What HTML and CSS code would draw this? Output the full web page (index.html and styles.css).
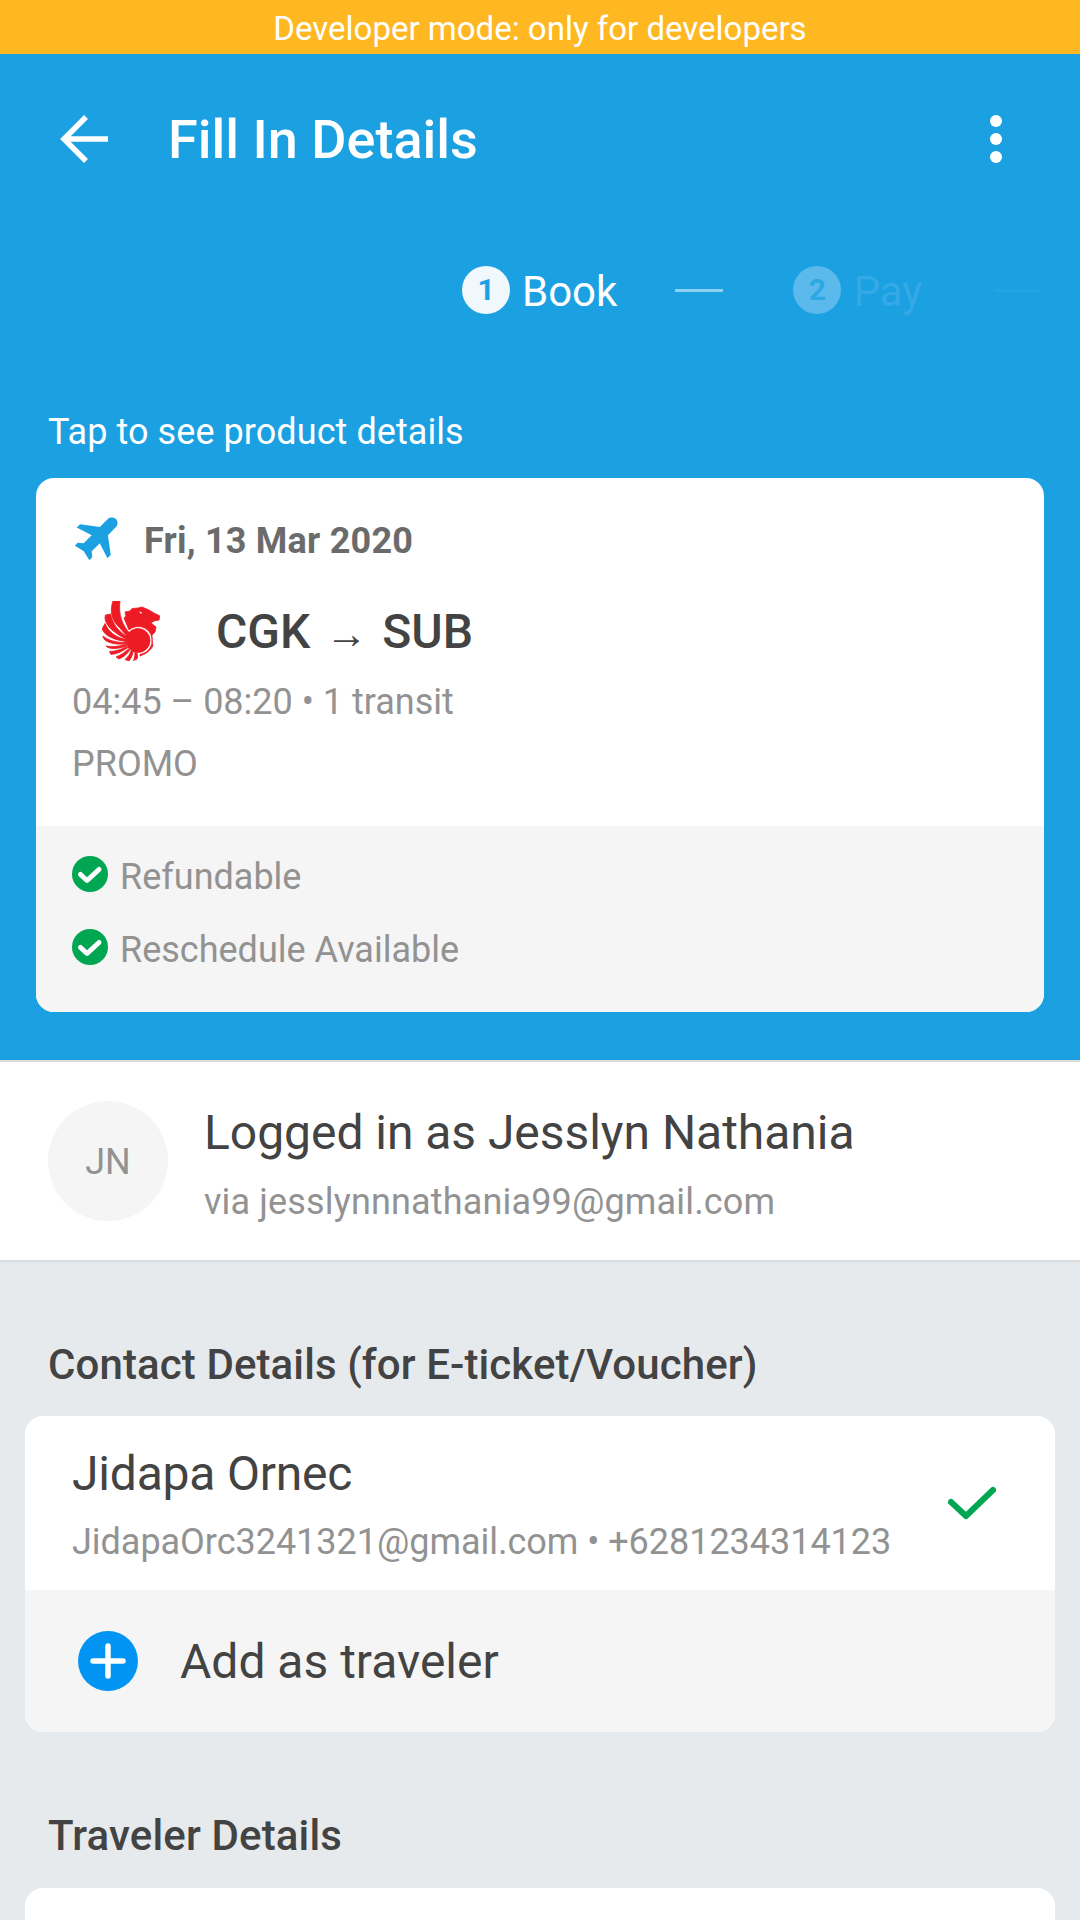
FILE: index.html
```html
<!DOCTYPE html>
<html lang="en">
<head>
<meta charset="utf-8">
<title>Fill In Details</title>
<link rel="stylesheet" href="styles.css">
</head>
<body>
<div class="screen">
  <div class="devbar">Developer mode: only for developers</div>
  <header class="hero">
    <div class="toolbar">
      <svg class="back" viewBox="0 0 48 48" aria-hidden="true"><path d="M48 24H5M26 2 4 24 26 46" fill="none" stroke="#fff" stroke-width="5.500"/></svg>
      <h1 class="title">Fill In Details</h1>
      <div class="more"><i></i><i></i><i></i></div>
    </div>
    <div class="steps">
      <span class="step-num">1</span><span class="step-label">Book</span><span class="step-line"></span>
      <span class="step-num step-num-dim">2</span><span class="step-label step-label-dim">Pay</span>
      <span class="step-line step-line-far"></span>
    </div>
    <p class="hint">Tap to see product details</p>
    <section class="card">
      <div class="card-main">
        <div class="date-row">
          <svg class="plane" viewBox="1.500 1.500 21 21" aria-hidden="true"><path transform="rotate(45 12 12)" d="M21.500 16.300v-2.100L14.500 9V4C14.500 2.500 13 1.500 12 1.500S9.500 2.500 9.500 4V9L2.500 14.200v2.100L9.500 14V19L7.500 20.700V22.500L12 21.400 16.500 22.500V20.700L14.500 19V14z" fill="#1ba0e2"/></svg>
          <span class="date">Fri, 13 Mar 2020</span>
        </div>
        <div class="route-row">
          <svg class="lion" viewBox="0 0 58 60" aria-hidden="true">
            <g fill="#ed1c24" stroke="#ed1c24" stroke-width=".8" stroke-linejoin="round">
              <path d="M11 0C8 8 9 18 15 24L25 35 27.500 32C21 25 16 14 18 0Z"/>
              <path d="M3.500 14C1 21 8 30 24 38L25.500 35.500C17 31 11 24 8.500 13Z"/>
              <path d="M0 28C3 35 12 39 24 40.500L25 38.500C15 37 7 32 3 22.500Z"/>
              <path d="M1 36C2 41 12 44 24 43L24 41.500C15 41.500 7 40 1 35Z"/>
              <path d="M5 46C11 49 19 47 24.500 45L24 43.500C17 45.500 10 46 4 45Z"/>
              <path d="M9 53.500C15 53 21 50 26 46.500L25 45.500C20 48 14 50.500 7.500 50.500Z"/>
              <path d="M17 58C22 56 25 53 28 49L26.500 48C23 51 19 54 14 56Z"/>
              <path d="M27 60C30 56 31 53 31 50L29 50C28 53 26 56 23 58.500Z"/>
              <path d="M35 58C36 56 35.500 53 34.500 51L33 51C33 53 33 56 31.500 59.500Z"/>
              <path d="M27 29 22 17 24 15 23 11 28 10 30 7.500 36 7 40 6 47 9 52 12 58 15 57 19 52 20 49 22 54 26 53 31 50 34 50 40 51 45Q47 52 38 55L38 53.400A14 14 0 1 0 27 29Z"/>
              <circle cx="36" cy="39.500" r="12"/>
            </g>
            <path d="M37 10.500l3 1-1 1.500z" fill="#fff"/>
          </svg>
          <span class="route">CGK <span class="arrow">→</span> SUB</span>
        </div>
        <p class="meta meta-time">04:45 – 08:20 • 1 transit</p>
        <p class="meta meta-class">PROMO</p>
      </div>
      <div class="card-foot">
        <div class="perk">
          <svg class="perk-icon" viewBox="0 0 36 36" aria-hidden="true"><circle cx="18" cy="18" r="18" fill="#00a651"/><path d="M8.500 18.500l6.500 6 12-11" fill="none" stroke="#fff" stroke-width="5" stroke-linecap="round" stroke-linejoin="round"/></svg>
          <span class="perk-label">Refundable</span>
        </div>
        <div class="perk">
          <svg class="perk-icon" viewBox="0 0 36 36" aria-hidden="true"><circle cx="18" cy="18" r="18" fill="#00a651"/><path d="M8.500 18.500l6.500 6 12-11" fill="none" stroke="#fff" stroke-width="5" stroke-linecap="round" stroke-linejoin="round"/></svg>
          <span class="perk-label">Reschedule Available</span>
        </div>
      </div>
    </section>
  </header>
  <section class="account">
    <div class="avatar">JN</div>
    <div class="account-text">
      <div class="account-name">Logged in as Jesslyn Nathania</div>
      <div class="account-mail">via jesslynnnathania99@gmail.com</div>
    </div>
  </section>
  <main class="content">
    <h2 class="section-title">Contact Details (for E-ticket/Voucher)</h2>
    <section class="panel">
      <div class="contact">
        <div class="contact-text">
          <div class="contact-name">Jidapa Ornec</div>
          <div class="contact-info">JidapaOrc3241321@gmail.com • +6281234314123</div>
        </div>
        <svg class="tick" viewBox="0 0 48 36" aria-hidden="true"><path d="M3 17 18 31 45 5" fill="none" stroke="#00a651" stroke-width="6" stroke-linecap="round" stroke-linejoin="round"/></svg>
      </div>
      <div class="add-row">
        <svg class="plus" viewBox="0 0 60 60" aria-hidden="true"><circle cx="30" cy="30" r="30" fill="#0194f3"/><path d="M30 15v30M15 30h30" stroke="#fff" stroke-width="5.500" stroke-linecap="round"/></svg>
        <span class="add-label">Add as traveler</span>
      </div>
    </section>
    <h2 class="section-title section-title-next">Traveler Details</h2>
    <section class="panel panel-open"></section>
  </main>
</div>
</body>
</html>
```
FILE: styles.css
```css
* { box-sizing: border-box; }
html, body { margin: 0; padding: 0; }
body { font-family: Roboto, "Noto Sans", sans-serif; background: #e6eaed; }
.screen { width: 1080px; height: 1920px; overflow: hidden; display: flex; flex-direction: column; background: #e6eaed; }

.devbar { height: 54px; background: #ffb822; color: #fff; font-size: 33px; line-height: 58px; text-align: center; flex: none; }

.hero { height: 1006px; background: #1ba0e2; flex: none; padding: 0 36px; color: #fff; }
.toolbar { height: 170px; margin: 0 -36px; padding: 0 78px 0 60px; display: flex; align-items: center; }
.back { width: 48px; height: 48px; flex: none; }
.title { margin: 2px 0 0 60px; font-size: 54px; font-weight: 500; line-height: 56px; flex: 1; }
.more { display: flex; flex-direction: column; gap: 6px; }
.more i { width: 12px; height: 12px; border-radius: 50%; background: #fff; display: block; }

.steps { height: 48px; margin-top: 42px; padding-left: 426px; display: flex; align-items: center; }
.step-num { width: 48px; height: 48px; border-radius: 50%; background: #f0f8fd; color: #1ba0e2; font-size: 30px; font-weight: 700; line-height: 48px; text-align: center; flex: none; }
.step-num-dim { margin-left: 70px; background: #5cb9ec; color: #2ea7e5; }
.step-label { margin-left: 12px; padding-top: 4px; font-size: 42px; line-height: 48px; }
.step-label-dim { color: #35a9e5; }
.step-line { width: 48px; height: 3px; margin-left: 58px; background: #8dd0f0; flex: none; }
.step-line-far { width: 46px; margin-left: 72px; background: #25a4e3; }

.hint { margin: 98px 0 0 12px; font-size: 36px; line-height: 40px; letter-spacing: .07px; }
.card { margin-top: 26px; height: 534px; border-radius: 18px; background: #fff; overflow: hidden; display: flex; flex-direction: column; }
.card-main { height: 348px; padding: 38px 36px 0; flex: none; }
.date-row { display: flex; align-items: center; height: 48px; }
.plane { width: 48px; height: 48px; margin: 0 0 8px 3px; flex: none; }
.date { margin-left: 21px; padding-top: 2px; font-size: 36px; font-weight: 700; color: #6b6b6b; letter-spacing: .22px; }
.route-row { display: flex; align-items: center; margin-top: 36px; height: 62px; padding-left: 30px; }
.lion { width: 58px; height: 60px; flex: none; }
.route { margin-left: 56px; font-size: 48px; font-weight: 500; color: #434343; }
.arrow { margin: 0 3px; font-family: "Liberation Serif", serif; font-weight: 400; font-size: 42px; }
.meta { margin: 0; font-size: 36px; color: #929292; line-height: 40px; }
.meta-time { margin-top: 20px; }
.meta-class { margin-top: 22px; }
.card-foot { flex: 1; background: #f5f5f5; padding: 30px 36px 0; display: flex; flex-direction: column; gap: 37px; }
.perk { display: flex; align-items: center; height: 36px; font-size: 36px; color: #929292; }
.perk-icon { width: 36px; height: 36px; margin-right: 12px; flex: none; }
.perk-label { padding-top: 5px; }

.account { height: 202px; flex: none; background: #fff; border-top: 2px solid #dcdcdc; border-bottom: 2px solid #d9dcdf; padding: 0 48px; display: flex; align-items: center; }
.avatar { width: 120px; height: 120px; border-radius: 50%; background: #f5f5f5; color: #929292; font-size: 36px; line-height: 122px; text-align: center; flex: none; }
.account-text { margin-left: 36px; padding-top: 7px; }
.account-name { font-size: 48px; color: #434343; line-height: 52px; letter-spacing: -.04px; }
.account-mail { margin-top: 23px; font-size: 36px; color: #929292; line-height: 40px; letter-spacing: .16px; }

.content { flex: 1; padding: 0 25px; }
.section-title { margin: 79px 0 0 23px; font-size: 42px; font-weight: 500; color: #434343; line-height: 48px; letter-spacing: .1px; }
.section-title-next { margin-top: 80px; letter-spacing: .15px; }
.panel { margin-top: 27px; border-radius: 18px; background: #fff; overflow: hidden; }
.panel-open { margin-top: 28px; height: 60px; border-radius: 18px 18px 0 0; }
.contact { height: 174px; padding: 0 59px 0 47px; display: flex; align-items: center; justify-content: space-between; }
.contact-text { padding-top: 4px; }
.contact-name { font-size: 48px; color: #434343; line-height: 52px; letter-spacing: -.2px; }
.contact-info { margin-top: 22px; font-size: 36px; color: #929292; line-height: 40px; letter-spacing: -.03px; }
.tick { width: 48px; height: 36px; flex: none; }
.add-row { height: 142px; background: #f5f5f5; padding-left: 53px; display: flex; align-items: center; }
.plus { width: 60px; height: 60px; flex: none; }
.add-label { margin-left: 42px; font-size: 48px; color: #434343; }
```
